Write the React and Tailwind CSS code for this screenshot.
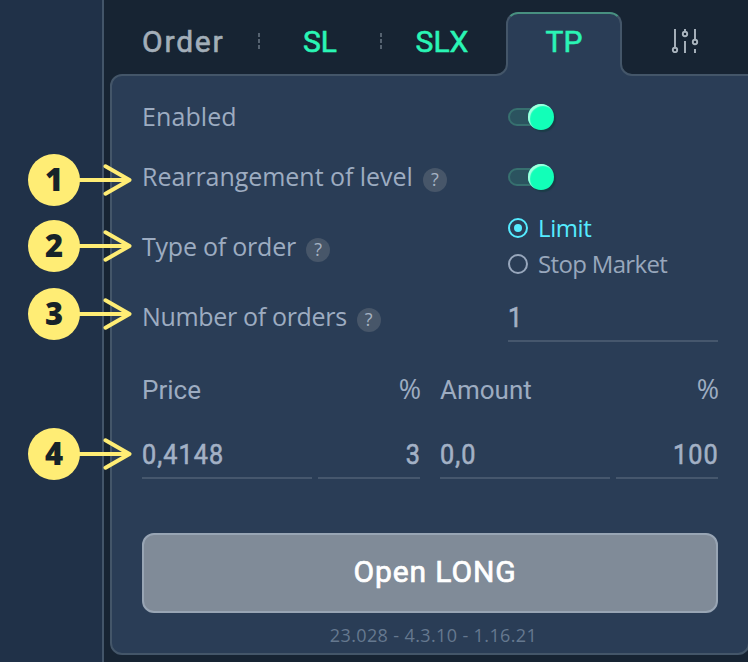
import clsx from "clsx";

const callouts = [
  { n: 1, top: "top-[154px]" },
  { n: 2, top: "top-[220px]" },
  { n: 3, top: "top-[288px]" },
  { n: 4, top: "top-[428px]" },
];

const Callout = ({ n, top }) => (
  <div className={clsx("absolute left-7 flex items-center", top)}>
    <div className="flex h-13 w-13 items-center justify-center rounded-full bg-[#ffed75] pb-0.5 font-['Open_Sans'] text-[31px] leading-none font-extrabold text-[#172329]">
      {n}
    </div>
    <svg className="-ml-px h-9 w-[54px]" viewBox="0 0 54 36" fill="none" stroke="#ffed75" strokeWidth="4" strokeLinecap="round" strokeLinejoin="round">
      <path d="M0 18H50.5M26.5 4.3L50.5 18L26.5 31.7" />
    </svg>
  </div>
);

const Divider = () => (
  <div className="flex w-0.5 flex-col gap-0.5">
    <span className="h-1 bg-[#556270]" />
    <span className="h-1 bg-[#556270]" />
    <span className="h-1 bg-[#556270]" />
  </div>
);

const Help = () => (
  <span className="mt-1.5 ml-2.5 flex h-6 w-6 items-center justify-center rounded-full bg-[#475669] pb-0.5 font-['Open_Sans'] text-[18px] leading-none text-[#a5b2c3]">
    ?
  </span>
);

const Toggle = () => (
  <div className="relative h-[18px] w-10 rounded-full border-2 border-[#37706f] bg-[#2b535f]">
    <span className="absolute -top-1.5 left-[18px] h-[26px] w-[26px] rounded-full bg-[#12ffb8] shadow-[2px_2px_1px_#1b3c48,inset_2px_2px_1px_#a4ffe0]" />
  </div>
);

const Radio = ({ label, checked, className }) => (
  <div className={clsx("flex h-9 items-center gap-2.5", checked ? "text-[#55ebff]" : "text-[#98a7bc]")}>
    <span className="flex h-5 w-5 items-center justify-center rounded-full border-2 border-current">
      {checked && <span className="h-2 w-2 rounded-full bg-current" />}
    </span>
    <span className={clsx("-mt-px whitespace-nowrap font-['Open_Sans'] text-[24px] leading-9", className)}>{label}</span>
  </div>
);

const Row = ({ label, help, className, height = "h-15", children }) => (
  <div className={clsx("flex items-center", height)}>
    <div className="flex w-[366px] items-center">
      <span className={clsx("-mt-0.5 whitespace-nowrap font-['Open_Sans'] text-[25px] leading-9 text-[#9dacc1]", className)}>{label}</span>
      {help && <Help />}
    </div>
    {children}
  </div>
);

const Field = ({ value, right, className }) => (
  <div className={clsx("h-[49px] border-b-2 border-[#46576d] font-['Roboto'] text-[28px] leading-[49px] tracking-[1.2px] text-[#a3b1c5] [-webkit-text-stroke:0.6px]", right && "text-right", className)}>
    <span className={clsx("inline-block scale-x-90", right ? "-mr-[0.6px] origin-right" : "origin-left")}>{value}</span>
  </div>
);

const SlidersIcon = () => (
  <svg className="h-6 w-7" viewBox="0 0 28 24" fill="none" stroke="#abb5bf" strokeWidth="1.9">
    <path d="M4 0V18M14 0V3M14 12V24M24 0V10.5M24 20V24" />
    <circle cx="4" cy="21" r="2.2" />
    <circle cx="14" cy="5" r="2.2" />
    <circle cx="24" cy="13" r="2.2" />
  </svg>
);

// inner curve between the active tab and the panel's top line
const Fillet = ({ className }) => (
  <svg className={clsx("absolute h-3.5 w-3.5", className)} viewBox="0 0 14 14">
    <path d="M0 13H2A11 11 0 0 0 13 2V0H14V14H0Z" fill="#2a3d56" />
    <path d="M0 13H2A11 11 0 0 0 13 2V0" fill="none" stroke="#445669" strokeWidth="2" />
  </svg>
);

const Tabs = () => (
  <div className="relative z-10 flex h-[76px] items-stretch pl-[38px] font-['Roboto'] text-[30px] leading-9 text-[#2af5b5] [-webkit-text-stroke:0.6px]">
    <div className="w-29 pt-6 tracking-[1.8px] text-[#a3aeb9]">Order</div>
    <div className="pt-[33px]"><Divider /></div>
    <div className="w-30 pt-6 text-center">SL</div>
    <div className="pt-[33px]"><Divider /></div>
    <div className="w-31 pt-6 pr-1 text-center">SLX</div>
    <div className="relative mt-3 w-29 rounded-t-xl border-x-2 border-t-2 border-x-[#445669] border-t-[#489080] bg-[#2a3d56] pt-2.5 text-center">
      TP
      <Fillet className="bottom-0 -left-3.5" />
      <Fillet className="-right-3.5 bottom-0 -scale-x-100" />
    </div>
    <div className="flex flex-1 justify-center pt-[29px]"><SlidersIcon /></div>
  </div>
);

const ColumnHead = ({ label }) => (
  <div className="flex w-[278px] justify-between font-['Roboto'] text-[26px] leading-9 text-[#9dacc1]">
    <span>{label}</span>
    <span className="-mt-px -mr-px font-['Open_Sans'] text-[27px]">%</span>
  </div>
);

export default function App() {
  return (
    <div className="relative flex h-[662px] w-[748px] overflow-hidden bg-[#172433]">
      <div className="w-26 shrink-0 border-r-2 border-[#435569] bg-[#203148]" />

      <div className="w-[644px] shrink-0">
        <Tabs />

        <div className="-mt-0.5 ml-1.5 h-[581px] w-[640px] rounded-xl rounded-tr-none border-2 border-[#445669] bg-[#2a3d56] px-[30px] pt-[11px]">
          <Row label="Enabled" className="tracking-[0.1px]"><Toggle /></Row>
          <Row label="Rearrangement of level" help className="tracking-[-0.04px]"><Toggle /></Row>
          <Row label="Type of order" help height="h-20" className="tracking-[-0.22px]">
            <div className="pb-0.5">
              <Radio label="Limit" checked className="tracking-[-0.4px]" />
              <Radio label="Stop Market" className="tracking-[-0.66px]" />
            </div>
          </Row>
          <Row label="Number of orders" help className="tracking-[-0.33px]">
            <Field value="1" className="w-[210px]" />
          </Row>

          <div className="mt-[25px] flex gap-5">
            <ColumnHead label="Price" />
            <ColumnHead label="Amount" />
          </div>

          <div className="mt-[22px] flex gap-5">
            <div className="flex gap-1.5">
              <Field value="0,4148" className="w-[170px]" />
              <Field value="3" right className="w-[102px]" />
            </div>
            <div className="flex gap-1.5">
              <Field value="0,0" className="w-[170px]" />
              <Field value="100" right className="w-[102px]" />
            </div>
          </div>

          <button className="mt-[54px] block h-20 w-[576px] rounded-xl border-2 border-[#98a5b4] bg-[#808b98] pb-1 pl-2.5 font-['Roboto'] text-[30px] tracking-[0.9px] text-white [-webkit-text-stroke:0.7px]">
            Open LONG
          </button>
          <div className="mt-[9px] pl-[7px] text-center font-['Open_Sans'] text-[18px] leading-[26px] tracking-[0.37px] text-[#65788f]">
            23.028 - 4.3.10 - 1.16.21
          </div>
        </div>
      </div>

      {callouts.map((c) => (
        <Callout key={c.n} {...c} />
      ))}
    </div>
  );
}
